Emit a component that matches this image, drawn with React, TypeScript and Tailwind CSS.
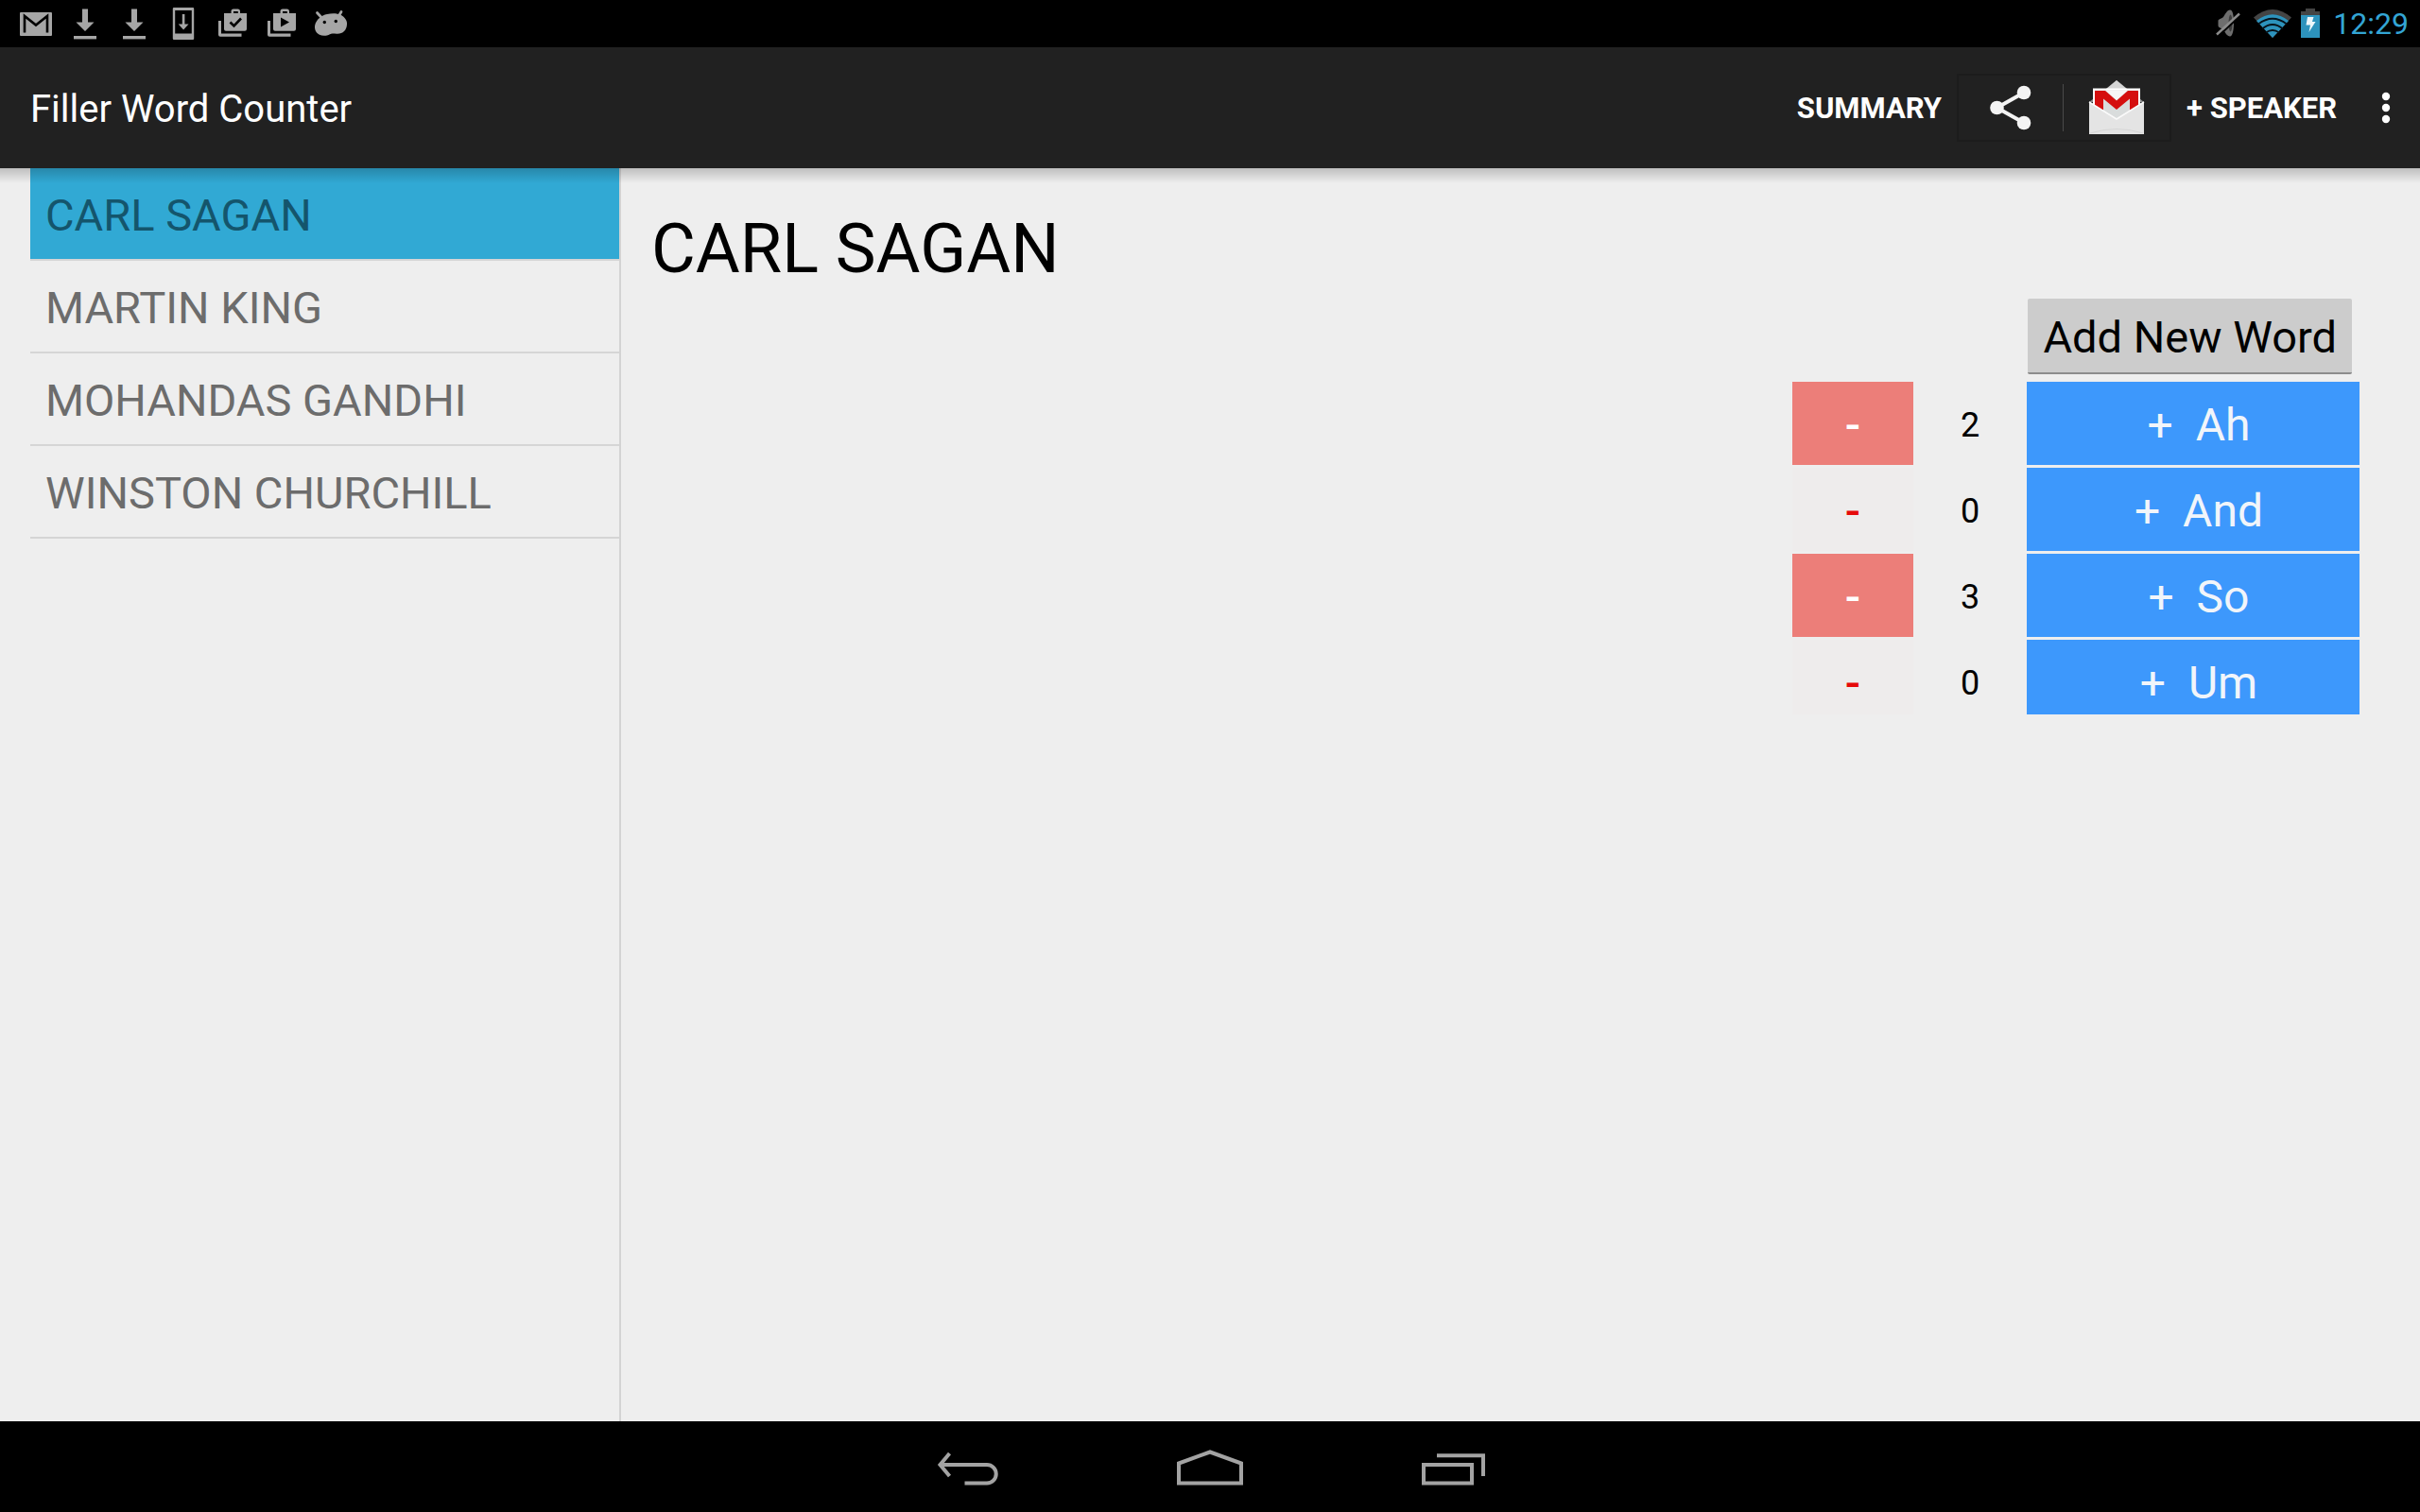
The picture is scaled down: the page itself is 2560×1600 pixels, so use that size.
import React, { useState } from "react";
import clsx from "clsx";

interface Word {
  label: string;
  count: number;
}

interface Speaker {
  name: string;
  words: Word[];
}

const emptyWords: Word[] = [
  { label: "Ah", count: 0 },
  { label: "And", count: 0 },
  { label: "So", count: 0 },
  { label: "Um", count: 0 },
];

const initialSpeakers: Speaker[] = [
  {
    name: "CARL SAGAN",
    words: [
      { label: "Ah", count: 2 },
      { label: "And", count: 0 },
      { label: "So", count: 3 },
      { label: "Um", count: 0 },
    ],
  },
  { name: "MARTIN KING", words: emptyWords },
  { name: "MOHANDAS GANDHI", words: emptyWords },
  { name: "WINSTON CHURCHILL", words: emptyWords },
];

function StatusIcon({ children }: Readonly<{ children: React.ReactNode }>) {
  return (
    <svg
      viewBox="0 0 52 50"
      className="w-[52px] h-[50px]"
      fill="#a6a6a6"
      aria-hidden="true"
    >
      {children}
    </svg>
  );
}

function DownloadIcon() {
  return (
    <StatusIcon>
      <path d="M23 9.5h6v14h6.5L26 33 16.500 23.500H23z" />
      <rect x="14" y="38" width="24" height="3.400" />
    </StatusIcon>
  );
}

function BagIcon({ children }: Readonly<{ children: React.ReactNode }>) {
  return (
    <StatusIcon>
      <path d="M11 22h3v13.500h21.500v3.200H13a2 2 0 0 1-2-2z" />
      <path
        fillRule="evenodd"
        d="M24.500 14v-2a2.500 2.500 0 0 1 2.500-2.500h4.500a2.500 2.500 0 0 1 2.500 2.500v2h7v16.700a2 2 0 0 1-2 2H19a2 2 0 0 1-2-2V14zM27 14h4.800v-2H27z"
      />
      {children}
    </StatusIcon>
  );
}

function StatusBar() {
  return (
    <div className="flex items-center justify-between h-[50px] pl-3 pr-3 bg-black">
      <div className="flex">
        <StatusIcon>
          <rect x="9" y="13" width="34" height="25" rx="1" />
          <path
            d="M14 34.500V17l12 9.500L38 17v17.500"
            fill="none"
            stroke="#000"
            strokeWidth="2.600"
          />
        </StatusIcon>
        <DownloadIcon />
        <DownloadIcon />
        <StatusIcon>
          <path
            fillRule="evenodd"
            d="M16 8h20a1.200 1.200 0 0 1 1.200 1.200v31.600A1.200 1.200 0 0 1 36 42H16a1.200 1.200 0 0 1-1.200-1.200V9.200A1.200 1.200 0 0 1 16 8zM17.200 11v24.500h17.600V11z"
          />
          <path d="M24.800 15h2.600v10.500h4.100L26.100 31.500 20.700 25.500h4.100z" />
        </StatusIcon>
        <BagIcon>
          <path
            d="M23.500 23.500l4 4 7.500-8"
            fill="none"
            stroke="#000"
            strokeWidth="2.600"
          />
        </BagIcon>
        <BagIcon>
          <path d="M25 18.500v10l9-5z" fill="#000" />
        </BagIcon>
        <StatusIcon>
          <path d="M14 19c2-2 5-3.500 8-4 5-1 11-1 15 1 4 2.500 6.500 6 6 10-.500 6-4 9.500-10 9.800-3 .200-6-.800-8 .400-4 2.200-8 2-11.500.300C9.500 34 8.500 30 9.200 26.500 10 23.500 11.500 21 14 19z" />
          <path
            d="M11.500 13.500l5.500 6M37 12.500l-3 5"
            stroke="#a6a6a6"
            strokeWidth="2.800"
            strokeLinecap="round"
          />
          <circle cx="19.300" cy="23.500" r="1.700" fill="#000" />
          <circle cx="31.300" cy="22.500" r="1.700" fill="#000" />
        </StatusIcon>
      </div>
      <div className="flex items-center gap-[10px]">
        <svg viewBox="0 0 26 50" className="w-[26px] h-[50px] mr-1" aria-hidden="true">
          <path
            d="M2.500 21.500c1-2 4-1.500 5.500-3.500 2-3 4-7.500 7-7.500 3 0 4 6 4 14s-1.500 14-4 14c-3 0-5-4-7-7-1.500-2-4.500-1.500-5.500-4z"
            fill="#6e6e6e"
          />
          <ellipse cx="15.500" cy="24.500" rx="2" ry="9" fill="#3c3c3c" />
          <path d="M2 39L26 16.500" stroke="#000" strokeWidth="2" />
          <path d="M1 36.500L25 14.500" stroke="#8c8c8c" strokeWidth="2.400" />
        </svg>
        <svg viewBox="0 0 40 50" className="w-10 h-[50px]" aria-hidden="true">
          <path d="M20 40L0 18.500Q20 1.500 40 18.500z" fill="#444" />
          <path d="M20 40L3 22Q20 8.500 37 22z" fill="#2d93bd" />
          <path
            d="M5 25.500Q20 14 35 25.500M9 30.500Q20 21.500 31 30.500M13 34.500Q20 29.500 27 34.500"
            fill="none"
            stroke="#06121a"
            strokeWidth="1.800"
          />
        </svg>
        <svg viewBox="0 0 20 50" className="w-5 h-[50px]" aria-hidden="true">
          <path d="M5 9h10v3h5v5H0v-5h5z" fill="#444" />
          <rect y="16" width="20" height="24" fill="#2d93bd" />
          <path d="M7 18h6.500l-1.500 5h3.500L8.500 34l1.500-7.500H5.500z" fill="#eef7fb" />
        </svg>
        <span className="pl-1 text-[32px] leading-[50px] text-[#33a5d5]">
          12:29
        </span>
      </div>
    </div>
  );
}

function GmailIcon() {
  return (
    <svg viewBox="0 0 60 60" className="w-[60px] h-[60px]" aria-hidden="true">
      <path d="M1 24L30 1l29 23z" fill="#8d8d8d" />
      <path d="M17 12L30 1l13 11z" fill="#d4d4d4" />
      <rect x="5" y="9.500" width="50" height="40" fill="#fff" />
      <rect x="7" y="11.500" width="46" height="34" fill="#d9dcdc" />
      <path d="M18 11.500h24L30 22z" fill="#f7f7f7" />
      <path d="M7 46V12h11l12 10.500L42 12h11v34h-9V20.500L30 32 16 20.500V46z" fill="#d50f0f" />
      <path d="M1 23.500L30 42l29-18.500V58H1z" fill="#e4e4e4" />
      <path d="M1 24L30 42l29-18" fill="none" stroke="#fafafa" strokeWidth="1.500" />
      <path d="M2 57q28-9 56 0" fill="none" stroke="#d6d6d6" />
    </svg>
  );
}

function ActionBar({ onAddSpeaker }: Readonly<{ onAddSpeaker: () => void }>) {
  return (
    <header className="relative flex items-center justify-between h-32 pl-8 bg-[#212121] text-white">
      <h1 className="pt-1 text-[40px] leading-[48px]">Filler Word Counter</h1>
      <div className="flex items-center">
        <button className="px-4 pt-[2px] text-[31px] font-bold">SUMMARY</button>
        <div className="flex items-center h-[72px] border-2 border-[#1c1c1c]">
          <button aria-label="Share" className="flex justify-center w-[110px]">
            <svg viewBox="0 0 48 48" className="w-12 h-12" fill="#f4f4f4">
              <path
                d="M38 8L9.500 24 38 40"
                fill="none"
                stroke="#f4f4f4"
                strokeWidth="4"
              />
              <circle cx="38" cy="8" r="7.300" />
              <circle cx="9.500" cy="24" r="7.300" />
              <circle cx="38" cy="40" r="7.300" />
            </svg>
          </button>
          <div className="w-px h-[50px] bg-[#4a4a4a]" />
          <button aria-label="Share with Gmail" className="flex justify-center w-[112px]">
            <GmailIcon />
          </button>
        </div>
        <button onClick={onAddSpeaker} className="px-4 pt-[2px] text-[31px] font-bold">
          + SPEAKER
        </button>
        <button aria-label="More options" className="flex justify-center w-[72px]">
          <svg viewBox="0 0 10 34" className="w-[10px] h-[34px]" fill="#fff">
            <circle cx="5" cy="5" r="4.200" />
            <circle cx="5" cy="17" r="4.200" />
            <circle cx="5" cy="29" r="4.200" />
          </svg>
        </button>
      </div>
      {/* Drop shadow over the content */}
      <div className="absolute inset-x-0 top-full z-10 h-4 bg-linear-to-b from-black/20 to-transparent pointer-events-none" />
    </header>
  );
}

function NavBar() {
  return (
    <nav className="flex justify-center h-24 bg-black">
      <button aria-label="Back" className="flex items-center justify-center w-64">
        <svg viewBox="0 0 72 48" className="w-[72px] h-12" fill="none" stroke="#a3a3a3" strokeWidth="4">
          <path d="M16.500 10L6.500 22l10 12" />
          <path d="M7 22h49a9.700 9.700 0 0 1 0 19.500H32.500" />
        </svg>
      </button>
      <button aria-label="Home" className="flex items-center justify-center w-64">
        <svg viewBox="0 0 72 48" className="w-[72px] h-12" fill="none" stroke="#a3a3a3" strokeWidth="4">
          <path d="M3 41.500V20.500L36 8.500l33 12v21z" />
        </svg>
      </button>
      <button aria-label="Recent apps" className="flex items-center justify-center w-64">
        <svg viewBox="0 0 72 48" className="w-[72px] h-12" fill="none" stroke="#a3a3a3" strokeWidth="4">
          <rect x="6" y="22" width="51" height="19.500" />
          <path d="M20 12.300h49V34" />
        </svg>
      </button>
    </nav>
  );
}

export default function App() {
  const [speakers, setSpeakers] = useState(initialSpeakers);
  const [selected, setSelected] = useState(0);

  const speaker = speakers[selected];

  const updateWords = (words: Word[]) => {
    setSpeakers(speakers.map((s, i) => (i === selected ? { ...s, words } : s)));
  };

  const changeCount = (label: string, delta: number) => {
    updateWords(
      speaker.words.map((w) =>
        w.label === label ? { ...w, count: Math.max(0, w.count + delta) } : w
      )
    );
  };

  const handleAddWord = () => {
    const label = window.prompt("New word");
    if (label) updateWords([...speaker.words, { label, count: 0 }]);
  };

  const handleAddSpeaker = () => {
    const name = window.prompt("Speaker name");
    if (name) {
      setSpeakers([...speakers, { name: name.toUpperCase(), words: emptyWords }]);
    }
  };

  return (
    <div className="flex flex-col min-h-screen bg-[#eeeeee] font-[Roboto,sans-serif]">
      <StatusBar />
      <ActionBar onAddSpeaker={handleAddSpeaker} />

      <div className="flex flex-1">
        {/* Speakers */}
        <aside className="w-[657px] pl-8 border-r-2 border-[#d3d3d3]">
          <ul>
            {speakers.map((s, i) => (
              <li key={s.name} className="border-b-2 border-[#d5d5d5]">
                <button
                  onClick={() => setSelected(i)}
                  className={clsx(
                    "block w-full h-24 px-4 pt-1 text-left text-[47px] leading-[56px]",
                    i === selected
                      ? "bg-[#31a9d4] text-[#14556c]"
                      : "text-[#6c6c6c]"
                  )}
                >
                  {s.name}
                </button>
              </li>
            ))}
          </ul>
        </aside>

        {/* Words of the selected speaker */}
        <main className="flex-1 pt-11 pl-8 pr-16 text-black">
          <h2 className="text-[72px] leading-[84px]">{speaker.name}</h2>
          <div className="flex flex-col items-end">
            <button
              onClick={handleAddWord}
              className="h-20 mt-[10px] mr-2 mb-2 px-4 pt-1 rounded-[2px] border-b-2 border-[#8c8c8c] bg-[#cccccc] text-[47px] leading-[56px]"
            >
              Add New Word
            </button>
            <ul className="flex flex-col gap-[3px]">
              {speaker.words.map((w) => (
                <li key={w.label} className="group flex">
                  <button
                    aria-label={`Remove one ${w.label}`}
                    onClick={() => changeCount(w.label, -1)}
                    className={clsx(
                      "w-32 h-[88px] group-last:h-[79px] text-[48px] leading-[92px] font-medium",
                      w.count > 0
                        ? "bg-[#ec7e79] text-white"
                        : "bg-[#eeecec] text-[#e60a0a]"
                    )}
                  >
                    -
                  </button>
                  <span className="w-[120px] h-[88px] group-last:h-[79px] text-center text-[36px] leading-[92px]">
                    {w.count}
                  </span>
                  <button
                    onClick={() => changeCount(w.label, 1)}
                    className="w-[352px] h-[88px] group-last:h-[79px] pl-3 bg-[#3d98fc] text-[48px] leading-[92px] text-[#f1f5fa] whitespace-pre"
                  >
                    {`+  ${w.label}`}
                  </button>
                </li>
              ))}
            </ul>
          </div>
        </main>
      </div>

      <NavBar />
    </div>
  );
}
